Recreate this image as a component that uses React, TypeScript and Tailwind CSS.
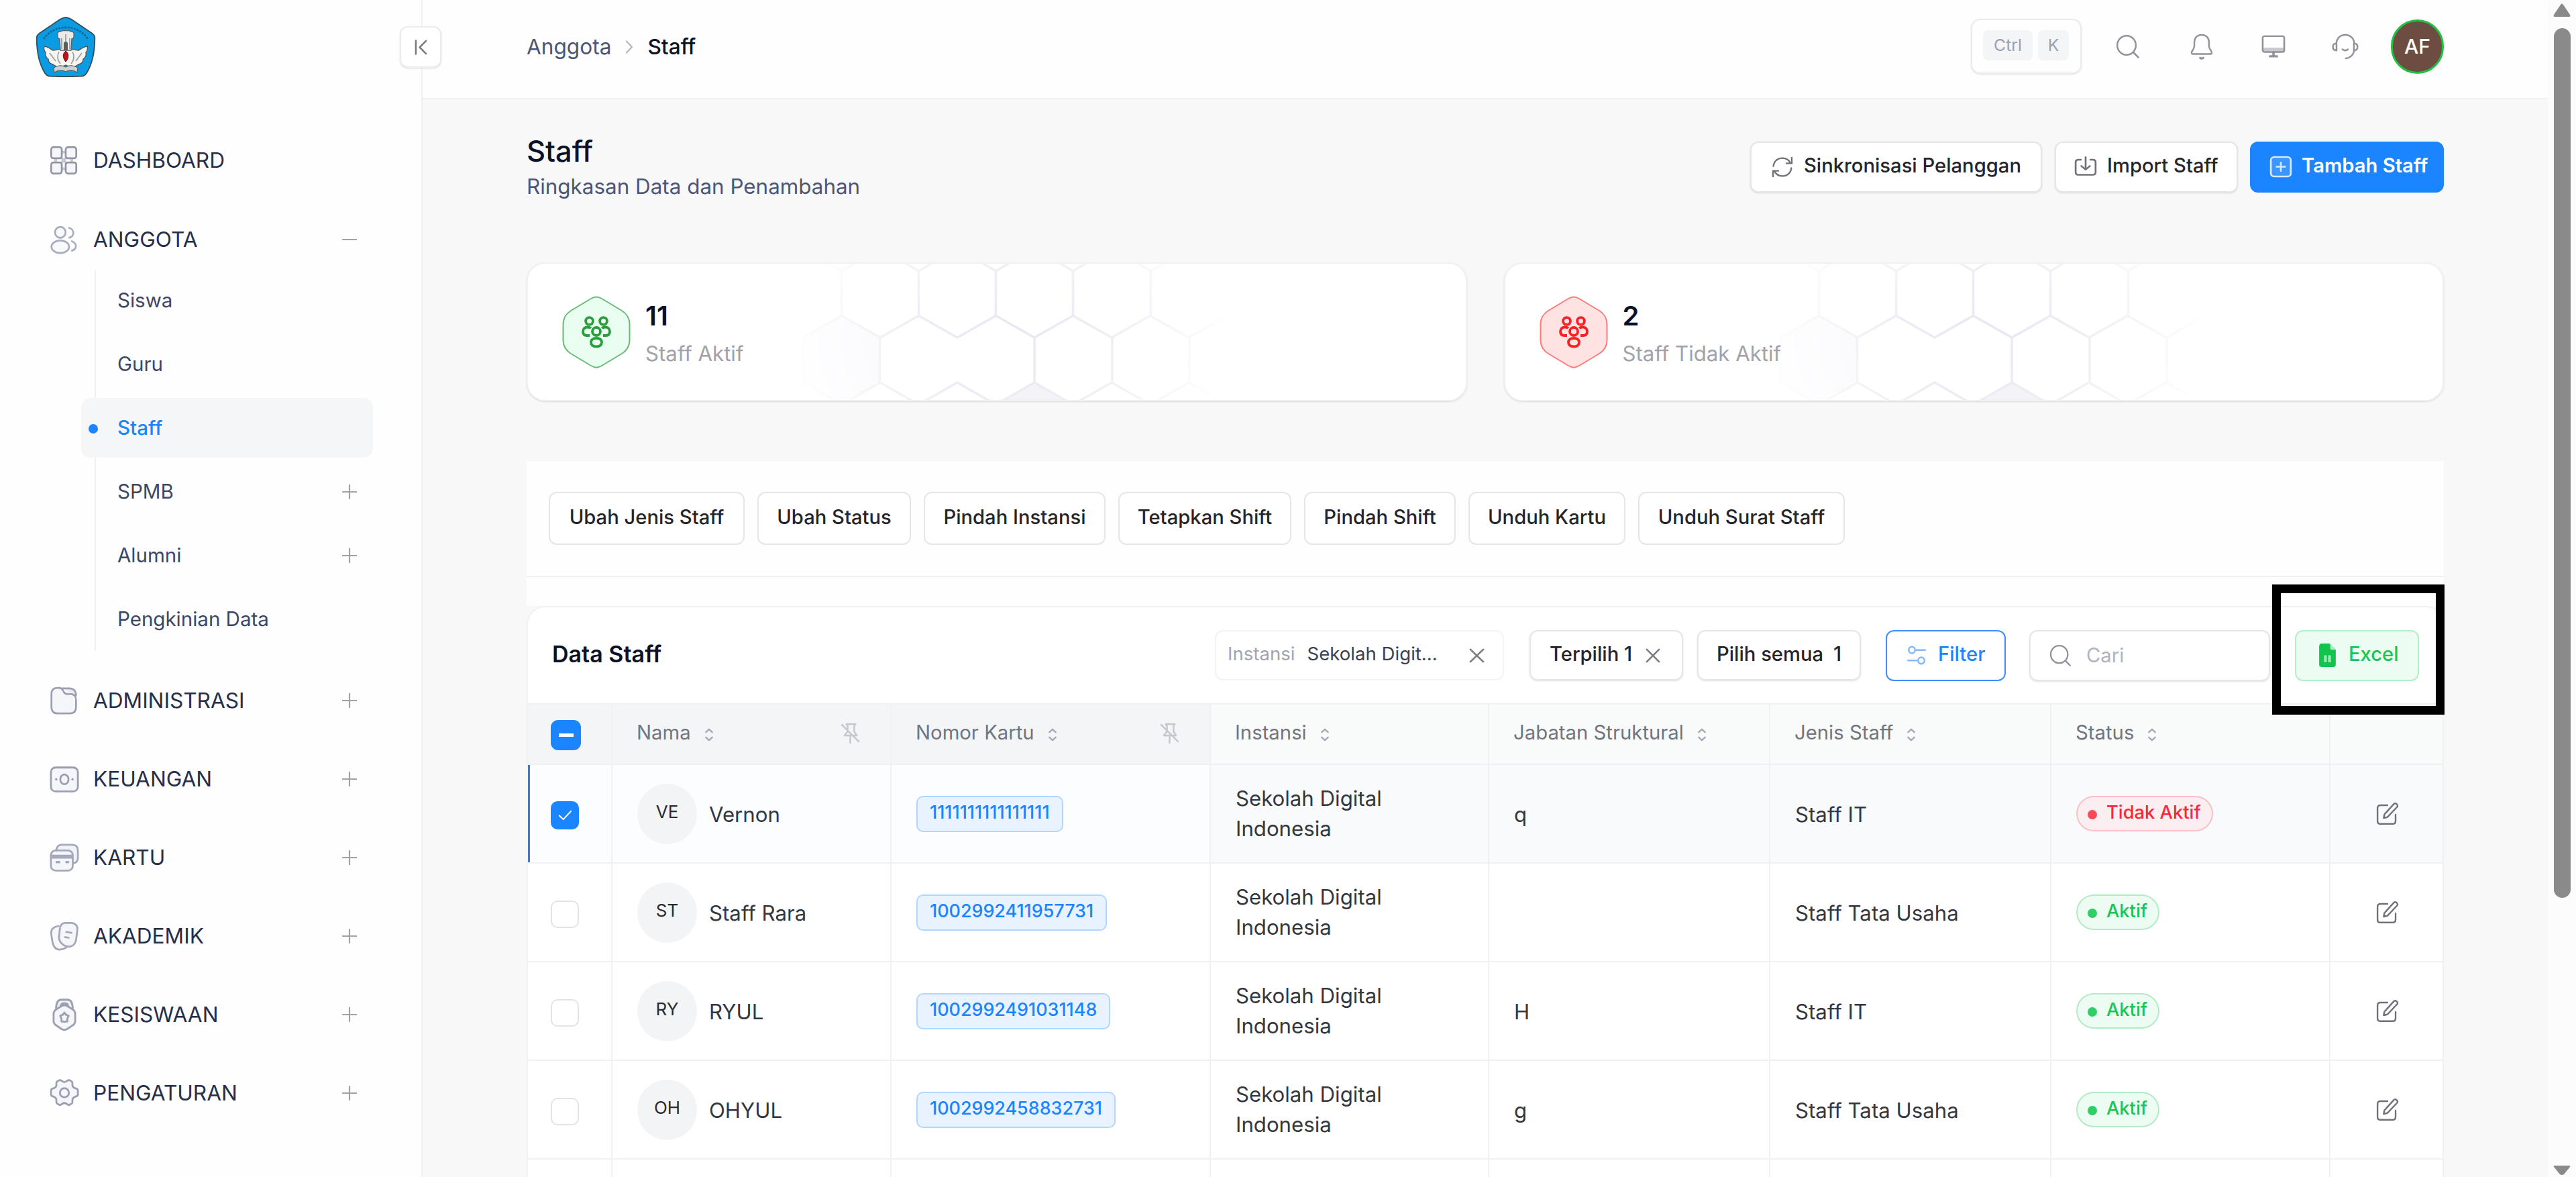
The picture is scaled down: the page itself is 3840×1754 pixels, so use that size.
import React from 'react';
import clsx from 'clsx';

interface IconProps {
  className?: string;
}

interface Staff {
  initials: string;
  name: string;
  card: string;
  jabatan: string;
  jenis: string;
  aktif: boolean;
  selected?: boolean;
}

const staffList: Staff[] = [
  { initials: 'VE', name: 'Vernon', card: '1111111111111111', jabatan: 'q', jenis: 'Staff IT', aktif: false, selected: true },
  { initials: 'ST', name: 'Staff Rara', card: '1002992411957731', jabatan: '', jenis: 'Staff Tata Usaha', aktif: true },
  { initials: 'RY', name: 'RYUL', card: '1002992491031148', jabatan: 'H', jenis: 'Staff IT', aktif: true },
  { initials: 'OH', name: 'OHYUL', card: '1002992458832731', jabatan: 'g', jenis: 'Staff Tata Usaha', aktif: true },
];

const bulkActions = [
  { label: 'Ubah Jenis Staff', width: 'w-[292px]' },
  { label: 'Ubah Status', width: 'w-[229px]' },
  { label: 'Pindah Instansi', width: 'w-[271px]' },
  { label: 'Tetapkan Shift', width: 'w-[258px]' },
  { label: 'Pindah Shift', width: 'w-[226px]' },
  { label: 'Unduh Kartu', width: 'w-[234px]' },
  { label: 'Unduh Surat Staff', width: 'w-[308px]' },
];

const Svg: React.FC<IconProps & { children: React.ReactNode; viewBox?: string; sw?: number }> = ({
  className,
  children,
  viewBox = '0 0 24 24',
  sw = 1.45,
}) => (
  <svg
    className={clsx('shrink-0', className)}
    viewBox={viewBox}
    preserveAspectRatio="none"
    fill="none"
    stroke="currentColor"
    strokeWidth={sw}
    strokeLinecap="round"
    strokeLinejoin="round"
  >
    {children}
  </svg>
);

// Ikon menu samping (duotone)
const DashboardIcon = () => (
  <Svg className="w-[44px] h-[46px] text-[#9496a8]">
    <path d="M10 5.5h4M10 18.5h4M5.5 10v4M18.5 10v4M10 10l4 4M14 10l-4 4" stroke="#c3c6d3" strokeWidth="2" />
    <rect x="1.8" y="1.8" width="8.6" height="8.6" rx="1.8" fill="#f5f6f8" />
    <rect x="13.6" y="1.8" width="8.6" height="8.6" rx="1.8" fill="#f5f6f8" />
    <rect x="1.8" y="13.6" width="8.6" height="8.6" rx="1.8" fill="#f5f6f8" />
    <rect x="13.6" y="13.6" width="8.6" height="8.6" rx="1.8" fill="#f5f6f8" />
  </Svg>
);

const UsersIcon = () => (
  <Svg className="w-[44px] h-[46px] text-[#a9acbe]">
    <circle cx="9.2" cy="6.4" r="4.3" fill="#f8f9fb" />
    <ellipse cx="9.2" cy="17.6" rx="7.2" ry="4.9" fill="#f8f9fb" />
    <path d="M16.4 3c2 .4 3.4 1.9 3.4 3.8s-1.4 3.4-3.3 3.7M18.6 13.3c1.9.8 3.3 2.1 3.3 3.8s-1.4 3-3.3 3.6" />
  </Svg>
);

const FolderIcon = () => (
  <Svg className="w-[44px] h-[46px] text-[#9c9fb2]">
    <path d="M11 2.5h5.5c3.5 0 5.5 2 5.5 5.5" fill="#e9eaf0" />
    <path d="M2 7c0-3 1.7-4.8 4.8-4.8h1.5c1.5 0 2.3.6 3 1.8l.9 1.5c.6 1 1.3 1.4 2.5 1.4H17c3.4 0 5 1.6 5 4.6V17c0 3.2-1.8 5-5 5H7c-3.3 0-5-1.8-5-5z" fill="#f5f6f9" />
  </Svg>
);

const MoneyIcon = () => (
  <Svg className="w-[46px] h-[46px] text-[#9c9fb2]">
    <rect x="1.5" y="3" width="21" height="18.6" rx="3.6" fill="#f5f6f9" />
    <ellipse cx="12" cy="12.2" rx="3.2" ry="3.8" />
    <path d="M5.6 12.2h.1M18.3 12.2h.1" strokeWidth="1.800" />
  </Svg>
);

const CardIcon = () => (
  <Svg className="w-[46px] h-[46px] text-[#a5a8ba]">
    <path d="M5.5 6.500C6 3.500 7.3 2 10 2h8c3 0 4.5 1.5 4.5 4.500V12c0 2.800-1.300 4.300-4 4.500" fill="#f2f3f7" />
    <rect x="1.500" y="6.500" width="17" height="15.600" rx="3.600" fill="#f5f6f9" />
    <path d="M1.500 12h17M1.500 10.500h17" />
    <path d="M6 15.500h2M13.500 15.500h1.500" strokeWidth="1.800" />
  </Svg>
);

const NoteIcon = () => (
  <Svg className="w-[46px] h-[46px] text-[#a5a8ba]">
    <path d="M7.5 4.200C4 4.600 1.400 6.500 1.700 10l1 6.500C3.500 20.500 5.500 22.800 9 22.400c2.400-.3 4-1 5-2" fill="#f8f8fa" />
    <path d="M12.500 1.800h5c3.200.3 4.900 2.200 4.600 5.200l-.9 7.200c-.6 4-3 6.200-6.200 6-3.800-.4-7.400-3.600-7.200-7.400l.6-6C8.800 3.500 10 1.900 12.500 1.800z" fill="#f5f6f9" />
    <path d="M13.500 8.800l4 .6M12.500 12.800l2.800.4" />
  </Svg>
);

const MedalIcon = () => (
  <Svg className="w-[46px] h-[50px] text-[#9c9fb2]">
    <path d="M5.500 7.500C5.700 3 7 1.300 9.500 1.300h5c2.500 0 3.800 1.700 4 6.200M9 6.200C9.200 4.500 10 4 12 4s2.800.5 3 2.200" fill="#eeeff4" />
    <path d="M9.800 5.900c1.500-.8 2.900-.8 4.400 0l4.400 2.500c1.200.7 1.800 1.800 1.800 3.200v4.900c0 1.400-.6 2.400-1.800 3.100l-4.400 2.700c-1.500.8-2.900.8-4.400 0l-4.400-2.700c-1.200-.7-1.800-1.700-1.800-3.100v-4.900c0-1.400.6-2.500 1.800-3.200z" fill="#f5f6f9" />
    <path d="M12 10.600l1.300 1.500 2 .8-1 1.900v2l-2.300.3-2.300-.3v-2l-1-1.900 2-.8z" />
  </Svg>
);

const SettingIcon = () => (
  <Svg className="w-[46px] h-[46px] text-[#9c9fb2]">
    <path
      d="M8.200 1.900c1.200-.5 1.900 1.500 3.800 1.500s2.600-2 3.800-1.500l2 1.100c1.100.8-.2 2.400.8 4s3.700 1.100 3.900 2.700v3.600c-.2 1.600-2.900 1.100-3.900 2.700s.3 3.200-.8 4l-2 1.200c-1.200.5-1.900-1.500-3.800-1.500s-2.600 2-3.800 1.500l-2-1.200c-1.100-.8.2-2.400-.8-4s-3.500-1.100-3.800-2.700V9.700C1.900 8.100 4.400 8.600 5.400 7s-.3-3.200.8-4z"
      fill="#f5f6f9"
    />
    <circle cx="12" cy="11.700" r="3.500" />
  </Svg>
);

// Ikon header & tombol
const SearchIcon: React.FC<IconProps> = ({ className }) => (
  <Svg className={className} sw={1.7}>
    <circle cx="11" cy="11" r="9.500" />
    <path d="M18.500 18.500l4.500 4.500" />
  </Svg>
);

const BellIcon: React.FC<IconProps> = ({ className }) => (
  <Svg className={className} sw={1.6}>
    <path d="M12 1.200c-4.600 0-7.300 3-7.300 6.800v3.200c0 1.300-.4 2.200-1.100 3.300l-1.300 1.900c-.9 1.300-.2 2.400 1.200 2.400h17c1.400 0 2.100-1.100 1.200-2.400l-1.300-1.900c-.7-1.100-1.100-2-1.100-3.300V8c0-3.800-2.700-6.800-7.300-6.800z" />
    <path d="M10.500 22.300c.8.800 2.200.8 3 0" strokeWidth="2" />
  </Svg>
);

const MonitorIcon: React.FC<IconProps> = ({ className }) => (
  <Svg className={className} sw={1.700}>
    <path d="M1.500 13.500h21v4.500h-21z" fill="currentColor" fillOpacity=".5" stroke="none" />
    <rect x="1.300" y="1.300" width="21.400" height="16.700" rx="1.800" />
    <path d="M12 18v4M8.500 22.500h7" strokeWidth="2.400" />
  </Svg>
);

const HeadsetIcon: React.FC<IconProps> = ({ className }) => (
  <Svg className={className} sw={1.500}>
    <path d="M4 9.500C4.200 4.500 7.500 1.200 12 1.200s8 3.300 8.200 8.300" />
    <path d="M4.200 9c-2.200 0-3.200 1.200-3.200 3.200s1 3.300 3.200 3.300zM19.800 9c2.200 0 3.200 1.200 3.200 3.200s-1 3.300-3.200 3.300z" />
    <path d="M20 15.500c-.6 4-3 6.600-7.400 7.300M9.500 14.500c1.500 1.200 3.500 1.200 5 0" />
  </Svg>
);

const SyncIcon: React.FC<IconProps> = ({ className }) => (
  <Svg className={className} sw={1.800}>
    <path d="M2 11C2.500 5.500 6.500 2 12 2c4 0 7.300 2 9 5.500M22.500 1.500v6.300h-6" />
    <path d="M22 13c-.5 5.500-4.500 9-10 9-4 0-7.300-2-9-5.500M1.500 22.500v-6.300h6" />
  </Svg>
);

const ImportIcon: React.FC<IconProps> = ({ className }) => (
  <Svg className={className} sw={1.900}>
    <path d="M7 4H4.500C2.500 4 1.500 5 1.500 7v12c0 2 1 3 3 3h15c2 0 3-1 3-3V7c0-2-1-3-3-3H17" />
    <path d="M12 1v14.500M7.500 11.500l4.500 4.300 4.500-4.300" />
  </Svg>
);

const PlusSquareIcon: React.FC<IconProps> = ({ className }) => (
  <Svg className={className} sw={1.900}>
    <rect x="1.500" y="1.500" width="21" height="21" rx="3.500" fill="#ffffff" fillOpacity=".15" />
    <path d="M12 7.500v9M7.500 12h9" />
  </Svg>
);

const FilterIcon: React.FC<IconProps> = ({ className }) => (
  <Svg className={className} sw={2.100}>
    <circle cx="6" cy="5.500" r="4" />
    <path d="M10.500 5.500H23M1 18.500h12" />
    <circle cx="18" cy="18.500" r="4" />
  </Svg>
);

const ExcelIcon: React.FC<IconProps> = ({ className }) => (
  <svg className={clsx('shrink-0', className)} viewBox="0 0 24 34" fill="none">
    <path d="M4 0h11l9 9v21a4 4 0 0 1-4 4H4a4 4 0 0 1-4-4V4a4 4 0 0 1 4-4z" fill="currentColor" />
    <path d="M16 0l8 9h-6a2 2 0 0 1-2-2z" fill="#a9ecc0" />
    <path d="M7 17h4v10H7zM13 17h4v10h-4z" fill="#9fe9b8" />
  </svg>
);

const CloseIcon: React.FC<IconProps> = ({ className }) => (
  <Svg className={className} sw={2.800}>
    <path d="M2 2l20 20M22 2L2 22" />
  </Svg>
);

const SortIcon = () => (
  <Svg className="w-[14px] h-[20px] text-[#a6a9b5]" viewBox="0 0 15 21" sw={2.600}>
    <path d="M2.500 6.500L7.500 2l5 4.500M2.500 14.500l5 4.500 5-4.500" />
  </Svg>
);

const PinOffIcon = () => (
  <Svg className="w-[29px] h-[33px] text-[#c5c8ce]" viewBox="0 0 30 33" sw={2.500}>
    <path d="M9 3h14l-2 3v8l4 6H6l5-6V6zM15 20v11M2 4l26 25" />
  </Svg>
);

const EditIcon = () => (
  <Svg className="w-[34px] h-[35px] text-[#71717a]" sw={1.700}>
    <path d="M12 3.500H4.500c-2 0-3 1-3 3v13c0 2 1 3 3 3h13c2 0 3-1 3-3V13" />
    <path d="M8 16.500l.8-3.800L19 1.800c1.800-.9 4.200 1.200 3.400 3L12 15.500z" />
  </Svg>
);

const Logo = () => (
  <svg className="w-[92px] h-[90px]" viewBox="0 0 92 90">
    <path d="M46 1c2 0 5 1 8 2.500l31 21c4 3 4.500 5 4.300 9C89 55 84 73 77 84c-2 3-4 4.500-8 4.700-14 .6-32 .6-46 0-4-.2-6-1.700-8-4.700C8 73 3 55 2.700 33.500c-.2-4 .3-6 4.300-9l31-21C41 2 44 1 46 1z" fill="#0a9be3" stroke="#31505f" strokeWidth="1.800" />
    <path d="M13 33C29 10 63 10 79 33" fill="none" stroke="#17668e" strokeWidth="2.800" strokeDasharray="3 1.600" />
    <path d="M14 44c5 0 9 4 13 6 6 0 12-3 19-3s13 3 19 3c4-2 8-6 13-6 1 4 0 7-2 9 1 4-1 8-4 10 0 4-3 7-7 8-5 4-12 5-19 1-7 4-14 3-19-1-4-1-7-4-7-8-3-2-5-6-4-10-2-2-3-5-2-9z" fill="#f6f5f1" stroke="#50575b" strokeWidth="1.400" />
    <path d="M34 27c-1-3 1-5 4-5 2-2 14-2 16 0 3 0 5 2 4 5 1 3-1 6-3 6l-1 17H38l-1-17c-2 0-4-3-3-6z" fill="#ecebe8" stroke="#5a6266" strokeWidth="1.400" />
    <path d="M40 32v16M52 32v16M46 26v12" stroke="#a5a7a6" strokeWidth="2" />
    <path d="M43 40c0-4 6-4 6 0v10h-6z" fill="#5b5c5c" />
    <path d="M22 54l9 12M70 54l-9 12M36 52c-3 6-3 12 2 18M56 52c3 6 3 12-2 18" fill="none" stroke="#9b9d9b" strokeWidth="1.600" />
    <path d="M46 51c5 4 5 10 0 16-5-6-5-12 0-16z" fill="#c1121c" stroke="#5c1115" />
    <path d="M28 76c6-4 13-4 18-1 5-3 12-3 18 1l-1 7c-6-4-12-4-17-1-5-3-11-3-17 1z" fill="#d0d2cf" stroke="#566065" strokeWidth="1.200" />
  </svg>
);

const menuBawah = [
  { label: 'ADMINISTRASI', icon: <FolderIcon /> },
  { label: 'KEUANGAN', icon: <MoneyIcon /> },
  { label: 'KARTU', icon: <CardIcon /> },
  { label: 'AKADEMIK', icon: <NoteIcon /> },
  { label: 'KESISWAAN', icon: <MedalIcon /> },
  { label: 'PENGATURAN', icon: <SettingIcon /> },
];

const subMenu = [
  { label: 'Siswa' },
  { label: 'Guru' },
  { label: 'Staff', active: true },
  { label: 'SPMB', plus: true },
  { label: 'Alumni', plus: true },
  { label: 'Pengkinian Data' },
];

const Toggle: React.FC<{ open?: boolean }> = ({ open }) => (
  <Svg className="w-[22px] h-[22px] text-[#a1a1aa]" sw={2.400}>
    <path d={open ? 'M1 12h22' : 'M1 12h22M12 1v22'} />
  </Svg>
);

const MenuItem: React.FC<{ label: string; icon: React.ReactNode; toggle?: 'open' | 'closed'; tall?: boolean }> = ({
  label,
  icon,
  toggle,
  tall,
}) => (
  <div className={clsx('flex items-center pl-[73px] pr-[96px]', tall ? 'h-[118px]' : 'h-[117px]')}>
    <div className="flex w-[66px] items-center">{icon}</div>
    <span className="flex-1 text-[31.600px] text-[#252f4a]">{label}</span>
    {toggle && <Toggle open={toggle === 'open'} />}
  </div>
);

const Sidebar = () => (
  <aside className="relative w-[630px] shrink-0 border-r-2 border-[#f1f1f2] bg-[#fefefe]">
    <div className="flex h-[180px] items-start pl-[52px] pt-[25px]">
      <Logo />
    </div>
    <button className="absolute left-[596px] top-[39px] flex h-[62px] w-[62px] items-center justify-center rounded-[12px] border-2 border-[#ececee] bg-white shadow-sm">
      <Svg className="w-[19px] h-[23px] text-[#78787f]" viewBox="0 0 20 24" sw={2.600}>
        <path d="M2 1.500v21M18 2L8 12l10 10" />
      </Svg>
    </button>
    <MenuItem label="DASHBOARD" icon={<DashboardIcon />} tall />
    <MenuItem label="ANGGOTA" icon={<UsersIcon />} toggle="open" tall />
    <div className="relative mb-[15px] -mt-[16px]">
      <div className="absolute bottom-0 left-[141px] top-[3px] w-[2px] bg-[#f1f1f4]" />
      {subMenu.map((item) => (
        <div key={item.label} className="flex h-[95px] items-center pl-[121px] pr-[72px]">
          <div
            className={clsx(
              'relative flex h-[89px] flex-1 items-center rounded-[14px] pl-[54px] pr-[24px]',
              item.active && 'bg-[#f4f6f8]'
            )}
          >
            {item.active && <span className="absolute left-[11px] top-[39px] h-[14px] w-[14px] rounded-full bg-[#1b84ff]" />}
            <span className={clsx('flex-1 text-[29.500px]', item.active ? 'font-medium text-[#1b84ff]' : 'text-[#3d4763]')}>
              {item.label}
            </span>
            {item.plus && <Toggle />}
          </div>
        </div>
      ))}
    </div>
    {menuBawah.map((item) => (
      <MenuItem key={item.label} label={item.label} icon={item.icon} toggle="closed" />
    ))}
  </aside>
);

const Header = () => (
  <header className="flex h-[148px] shrink-0 items-start justify-between border-b-2 border-[#f1f1f2] bg-[#fefefe] px-[155px] pt-[28px]">
    <div className="flex h-[84px] items-center text-[31.600px]">
      <span className="text-[#4b5675]">Anggota</span>
      <Svg className="mx-[21px] w-[12px] h-[20px] text-[#b5b5be]" viewBox="0 0 12 20" sw={2.200}>
        <path d="M2 1.500l8 8.500-8 8.500" />
      </Svg>
      <span className="font-medium text-[#0b1126]">Staff</span>
    </div>
    <div className="flex h-[82px] items-center">
      <div className="mr-[51px] flex h-[82px] w-[165px] items-center gap-[8px] rounded-[14px] border-2 border-[#ebebed] pb-[3px] pl-[16px] shadow-sm">
        <kbd className="flex h-[45px] w-[74px] items-center justify-center rounded-[8px] bg-[#f4f5f6] font-[Inter] text-[24.700px] text-[#99a1b0]">Ctrl</kbd>
        <kbd className="flex h-[45px] w-[46px] items-center justify-center rounded-[8px] bg-[#f4f5f6] font-[Inter] text-[24.700px] text-[#99a1b0]">K</kbd>
      </div>
      <SearchIcon className="mr-[75px] w-[35px] h-[36px] text-[#92929c]" />
      <BellIcon className="mr-[71px] w-[36px] h-[39px] text-[#92929c]" />
      <MonitorIcon className="mr-[69px] w-[36px] h-[34px] text-[#92929c]" />
      <HeadsetIcon className="mr-[48px] w-[40px] h-[39px] text-[#92929c]" />
      <div className="flex h-[81px] w-[79px] items-center justify-center rounded-full border-[3px] border-[#22c043] bg-[#6d4c41] text-[30px] font-medium text-white">
        AF
      </div>
    </div>
  </header>
);

// Pola heksagon di latar kartu statistik
const HexPattern: React.FC<{ id: string }> = ({ id }) => (
  <svg className="absolute left-[287px] top-0 h-[206px] w-[840px]" viewBox="0 0 840 206" fill="none">
    <defs>
      <radialGradient id={`fade-${id}`} gradientUnits="userSpaceOnUse" cx="0" cy="0" r="1" gradientTransform="translate(430 115) scale(335 240)">
        <stop offset="0" stopColor="#fff" />
        <stop offset=".4" stopColor="#fff" stopOpacity=".75" />
        <stop offset="1" stopColor="#fff" stopOpacity="0" />
      </radialGradient>
      <mask id={`mask-${id}`}>
        <rect width="840" height="206" fill={`url(#fade-${id})`} />
      </mask>
    </defs>
    <g mask={`url(#mask-${id})`} stroke="#e7e7f1" strokeWidth="3.500">
      <path d="M123.500 109l57.500-32 57.500 32v67l-57.500 33-57.500-33z" fill="#f7f7fd" stroke="none" />
      <path d="M468 177l57 32h-114z" fill="#f0f0f6" stroke="none" />
      <path d="M123.500 110l57-32.500 57.500 32.500 57.500-32.500 57.500 32.500 57.500-32.500 57.500 32.500 57.500-32.500 57.500 32.500 57.500-32.500 57.500 32.500 57.500-32.500" />
      <path d="M180.500 11v67M295.500 11v67M410.500 11v67M525.500 11v67M641.500 11v67" />
      <path d="M123.500 110v67M237.500 110v67M468 110v67M584 110v67M699 110v67" />
      <path d="M123.500 177l57 33 57.500-33 57.500 33 57.500-33 57.500 33 57.500-33 57.500 33 57.500-33 57.500 33 57.500-33 57.500 33" />
      <path d="M160.500-1l20 12 20-12M275.500-1l20 12 20-12M390.500-1l20 12 20-12M505.500-1l20 12 20-12M621.500-1l20 12 20-12" />
    </g>
  </svg>
);

interface StatCardProps {
  id: string;
  value: string;
  label: string;
  danger?: boolean;
}

const StatCard: React.FC<StatCardProps> = ({ id, value, label, danger }) => (
  <div className="relative flex h-[207px] items-center overflow-hidden rounded-[28px] border-2 border-[#f1f1f2] bg-white pl-[51px] shadow-sm">
    <HexPattern id={id} />
    <svg className="relative h-[108px] w-[102px]" viewBox="0 0 102 108" fill="none">
      <path
        d="M43 4c6-3.500 10-3.500 16 0l30 18c8 5 11.500 11 11.500 20v24c0 9-3.500 15-11.500 20l-30 18c-6 3.500-10 3.500-16 0L13 86C5 81 1.500 75 1.500 66V42c0-9 3.500-15 11.500-20z"
        fill={danger ? '#ffe2e2' : '#e9fdf0'}
        stroke={danger ? '#fb7b7b' : '#67bb74'}
        strokeWidth="2"
      />
      <g stroke={danger ? '#fb1f24' : '#2a9d3d'} strokeWidth="3.800">
        <circle cx="40.500" cy="37.500" r="5.400" />
        <circle cx="61.500" cy="37.500" r="5.400" />
        <circle cx="51" cy="53" r="6" />
        <path d="M43 69c0-4 3.500-6 8-6s8 2 8 6-3 6.500-8 6.500-8-2.500-8-6.500z" />
        <path d="M41 59h-4c-4 0-6-2-6-6s3-6.500 7-6.500c2 0 3.500.5 4.500 2M61 59h4c4 0 6-2 6-6s-3-6.500-7-6.500c-2 0-3.500.5-4.500 2" />
      </g>
    </svg>
    <div className="relative ml-[22px] flex flex-col pt-[7px]">
      <span className="text-[40px] font-semibold leading-[48px] text-[#0b1126]">{value}</span>
      <span className="mt-[9px] text-[31.200px] leading-[46px] text-[#a1a1aa]">{label}</span>
    </div>
  </div>
);

const buttonBase = 'flex items-center rounded-[12px] border-2 text-[29.200px] font-medium';

const PageTitle = () => (
  <div className="flex items-start justify-between pt-[53px]">
    <div className="flex flex-col">
      <h1 className="text-[43.500px] font-medium leading-[48px] text-[#0b1126]">Staff</h1>
      <p className="mt-[9px] text-[31.400px] leading-[40px] text-[#4b5675]">Ringkasan Data dan Penambahan</p>
    </div>
    <div className="mt-[10px] flex">
      <button className={clsx(buttonBase, 'mr-[19px] h-[76px] w-[435px] border-[#e6e6e8] bg-white pb-[5px] pl-[30px] text-[#252529] shadow-sm')}>
        <SyncIcon className="mr-[16px] mt-[5px] w-[32px] h-[32px] text-[#71717a]" />
        Sinkronisasi Pelanggan
      </button>
      <button className={clsx(buttonBase, 'mr-[18px] h-[76px] w-[273px] border-[#e6e6e8] bg-white pb-[5px] pl-[27px] text-[#252529] shadow-sm')}>
        <ImportIcon className="mr-[15px] mt-[3px] w-[34px] h-[30px] text-[#71717a]" />
        Import Staff
      </button>
      <button className={clsx(buttonBase, 'h-[76px] w-[289px] border-[#1b84ff] bg-[#1b84ff] pb-[5px] pl-[27px] font-semibold text-white')}>
        <PlusSquareIcon className="mr-[14px] mt-[4px] w-[34px] h-[33px] text-[#d6e8ff]" />
        Tambah Staff
      </button>
    </div>
  </div>
);

const Toolbar = () => (
  <div className="flex h-[145px] items-center border-b-2 border-[#f1f1f2] bg-white pl-[36px] pr-[35px]">
    <h2 className="flex-1 pb-[5px] text-[34px] font-semibold text-[#0b1126]">Data Staff</h2>
    <div className="mr-[38px] flex h-[75px] w-[431px] items-center rounded-[12px] border-2 border-[#f3f3f4] pl-[17px] text-[27.600px]">
      <span className="pb-[3px] text-[#a1a5b0]">Instansi</span>
      <span className="ml-[18px] flex-1 pb-[3px] text-[#3c4150]">Sekolah Digit...</span>
      <CloseIcon className="mr-[27px] w-[23px] h-[22px] text-[#7c7c84]" />
    </div>
    <button className={clsx(buttonBase, 'mr-[21px] h-[75px] w-[229px] border-[#e6e6e8] pb-[3px] pl-[28px] text-[#252529] shadow-sm')}>
      <span className="flex-1 text-left">Terpilih 1</span>
      <CloseIcon className="mr-[32px] mt-[3px] w-[22px] h-[22px] text-[#7c7c84]" />
    </button>
    <button className={clsx(buttonBase, 'mr-[37px] h-[75px] w-[244px] justify-between border-[#e6e6e8] pb-[3px] pl-[27px] pr-[27px] text-[#252529] shadow-sm')}>
      <span>Pilih semua</span>
      <span>1</span>
    </button>
    <button className={clsx(buttonBase, 'mr-[35px] h-[76px] w-[179px] border-[#3f8dff] pb-[4px] pl-[30px] text-[#1b84ff]')}>
      <FilterIcon className="mr-[18px] mt-[4px] w-[28px] h-[29px] text-[#7fb9ff]" />
      Filter
    </button>
    <div className="mr-[37px] flex h-[76px] w-[359px] items-center rounded-[12px] border-2 border-[#e6e6e8] pl-[28px] text-[29.200px] text-[#b0b3bd] shadow-sm">
      <SearchIcon className="mr-[23px] w-[32px] h-[33px] text-[#92929c]" />
      Cari
    </div>
    <button className={clsx(buttonBase, 'h-[76px] w-[185px] border-[#b5efc8] bg-[#ecfcf2] pb-[4px] pl-[34px] text-[#17c653]')}>
      <ExcelIcon className="mr-[19px] mt-[3px] w-[25px] h-[35px] text-[#12c34c]" />
      Excel
    </button>
  </div>
);

const HeadCell: React.FC<{ label: string; pinned?: boolean }> = ({ label, pinned }) => (
  <th
    className={clsx(
      'h-[90px] border-b-2 border-r-2 border-[#eff0f2] p-0 text-left text-[29.300px] font-normal text-[#71757f]',
      pinned ? 'bg-[#f3f5f7]' : 'bg-[#f9fafa]'
    )}
  >
    <div className="flex items-center pb-[4px] pl-[36px] pr-[45px]">
      <span>{label}</span>
      <div className="ml-[20px] flex-1 pt-[5px]">
        <SortIcon />
      </div>
      {pinned && <PinOffIcon />}
    </div>
  </th>
);

const StatusBadge: React.FC<{ aktif: boolean }> = ({ aktif }) => (
  <span
    className={clsx(
      'inline-flex h-[53px] items-center rounded-full border-2 pl-[15px] pr-[16px] text-[27.300px] font-medium',
      aktif ? 'border-[#b3ebc6] bg-[#edfcf3] text-[#17c653]' : 'border-[#fbc0c6] bg-[#faeef0] text-[#f8283a]'
    )}
  >
    <span className={clsx('mr-[14px] mt-[2px] h-[14px] w-[14px] rounded-full', aktif ? 'bg-[#2fce66]' : 'bg-[#fc4a58]')} />
    <span className="pb-[3px]">{aktif ? 'Aktif' : 'Tidak Aktif'}</span>
  </span>
);

const StaffRow: React.FC<{ staff: Staff }> = ({ staff }) => {
  const cell = clsx('h-[147px] border-b-2 border-r-2 border-[#f1f1f2] p-0 pl-[37px]', staff.selected && 'bg-[#f8fafb]');
  const pinnedCell = clsx('h-[147px] border-b-2 border-r-2 border-[#f1f1f2] p-0 pl-[37px]', staff.selected ? 'bg-[#fcfdfe]' : 'bg-white');

  return (
    <tr className="text-[31.200px] text-[#33373f]">
      <td className={clsx('relative h-[147px] border-b-2 border-r-2 border-[#f1f1f2] p-0 pl-[34px]', staff.selected && 'bg-[#fcfdfe]')}>
        {staff.selected && <span className="absolute bottom-0 left-0 top-0 w-[3px] bg-[#1b84ff]" />}
        {staff.selected ? (
          <span className="mt-[4px] flex h-[42px] w-[42px] items-center justify-center rounded-[10px] bg-[#1b84ff]">
            <Svg className="w-[21px] h-[16px] text-white" viewBox="0 0 22 17" sw={2.200}>
              <path d="M2 9l6 6L20 2" />
            </Svg>
          </span>
        ) : (
          <span className="mt-[5px] block h-[41px] w-[42px] rounded-[10px] border-2 border-[#e4e4e7] bg-white" />
        )}
      </td>
      <td className={pinnedCell}>
        <div className="flex items-center">
          <span className="flex h-[90px] w-[89px] items-center justify-center rounded-full bg-[#f3f4f6] pb-[6px] text-[26px] text-[#2b2b30]">
            {staff.initials}
          </span>
          <span className="ml-[18px] pt-[3px]">{staff.name}</span>
        </div>
      </td>
      <td className={pinnedCell}>
        <span className="inline-flex h-[54px] items-center rounded-[10px] border-2 border-[#b2d6ff] bg-[#e9f3ff] px-[18px] pb-[5px] text-[26.900px] font-medium text-[#1b84ff]">
          {staff.card}
        </span>
      </td>
      <td className={clsx(cell, 'leading-[45px]')}>
        Sekolah Digital
        <br />
        Indonesia
      </td>
      <td className={clsx(cell, 'pt-[3px]')}>{staff.jabatan}</td>
      <td className={clsx(cell, 'pt-[3px]')}>{staff.jenis}</td>
      <td className={cell}>
        <StatusBadge aktif={staff.aktif} />
      </td>
      <td className="h-[147px] border-b-2 border-[#f1f1f2] p-0">
        <div className={clsx('flex h-[145px] items-center justify-center pl-[2px]', staff.selected && 'bg-[#f8fafb]')}>
          <EditIcon />
        </div>
      </td>
    </tr>
  );
};

const StaffTable = () => (
  <div className="overflow-hidden rounded-t-[28px] border-2 border-b-0 border-[#f1f1f2] bg-white">
    <Toolbar />
    <table className="w-full table-fixed border-separate border-spacing-0">
      <colgroup>
        <col className="w-[126px]" />
        <col className="w-[416px]" />
        <col className="w-[476px]" />
        <col className="w-[415px]" />
        <col className="w-[419px]" />
        <col className="w-[419px]" />
        <col className="w-[416px]" />
        <col />
      </colgroup>
      <thead>
        <tr>
          <th className="border-b-2 border-r-2 border-[#eff0f2] bg-[#f3f5f7] p-0 pl-[34px]">
            <span className="mt-[3px] flex h-[45px] w-[45px] items-center justify-center rounded-[11px] bg-[#1b84ff]">
              <span className="h-[5px] w-[22px] bg-white" />
            </span>
          </th>
          <HeadCell label="Nama" pinned />
          <HeadCell label="Nomor Kartu" pinned />
          <HeadCell label="Instansi" />
          <HeadCell label="Jabatan Struktural" />
          <HeadCell label="Jenis Staff" />
          <HeadCell label="Status" />
          <th className="border-b-2 border-[#eff0f2] bg-[#f9fafa] p-0" />
        </tr>
      </thead>
      <tbody>
        {staffList.map((staff) => (
          <StaffRow key={staff.name} staff={staff} />
        ))}
        <tr>
          {[1, 2, 3, 4, 5, 6, 7].map((n) => (
            <td key={n} className="h-[60px] border-r-2 border-[#f1f1f2] p-0" />
          ))}
          <td />
        </tr>
      </tbody>
    </table>
  </div>
);

const App: React.FC = () => {
  return (
    <div className="relative flex h-[1754px] w-[3840px] overflow-hidden bg-[#f8f8f8] font-[Inter,sans-serif]">
      <Sidebar />
      <div className="flex min-w-0 flex-1 flex-col">
        <Header />
        <main className="flex-1 px-[155px]">
          <PageTitle />
          <div className="mt-[93px] grid grid-cols-2 gap-[55px]">
            <StatCard id="aktif" value="11" label="Staff Aktif" />
            <StatCard id="tidak-aktif" value="2" label="Staff Tidak Aktif" danger />
          </div>
          <div className="mt-[89px] bg-[#fefefe] pb-[43px]">
            <div className="flex h-[173px] gap-[19px] border-b-2 border-[#f1f1f2] pl-[33px] pt-[46px]">
              {bulkActions.map((action) => (
                <button
                  key={action.label}
                  className={clsx(buttonBase, action.width, 'h-[79px] justify-center border-[#e6e6e8] bg-white pb-[4px] text-[#252529]')}
                >
                  {action.label}
                </button>
              ))}
            </div>
          </div>
          <StaffTable />
        </main>
      </div>

      {/* Scrollbar */}
      <div className="flex w-[42px] shrink-0 flex-col items-center justify-between bg-[#fcfcfc] pb-[3px] pt-[5px]">
        <svg className="h-[20px] w-[26px] shrink-0" viewBox="0 0 26 20">
          <path d="M11 2q2-3 4 0l10 15q1 3-1 3H2q-2 0-1-3z" fill="#8a8a8a" />
        </svg>
        <div className="mt-[17px] h-[1296px] w-[25px] shrink-0 rounded-full bg-[#8a8a8a]" />
        <div className="flex-1" />
        <svg className="h-[14px] w-[26px] shrink-0" viewBox="0 0 26 14">
          <path d="M2 0h22q2 0 1 2l-9 11q-3 2-6 0L1 2Q0 0 2 0z" fill="#8a8a8a" />
        </svg>
      </div>

      {/* Sorotan tombol Excel */}
      <div className="absolute left-[3387px] top-[871px] h-[194px] w-[257px] border-[13px] border-black" />
    </div>
  );
};

export default App;
